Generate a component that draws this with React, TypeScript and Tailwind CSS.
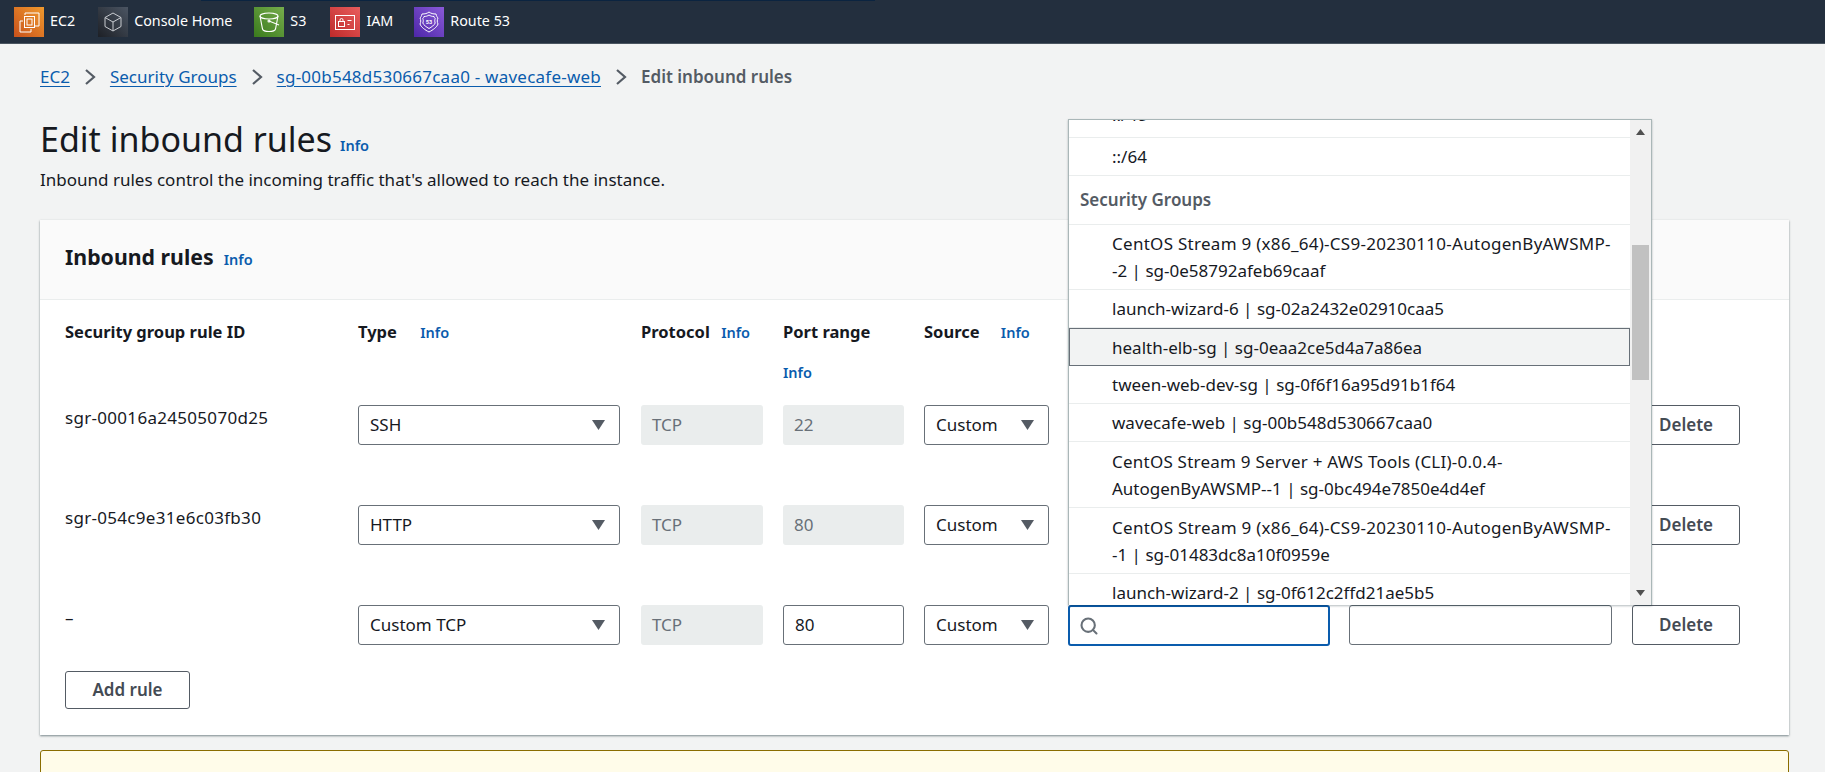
import React from "react";
import { Search } from "lucide-react";

function Caret({ className }: { className?: string }) {
  return (
    <svg width="13" height="10" viewBox="0 0 13 10" className={className}>
      <polygon points="0,0 13,0 6.5,10" fill="#545b64" />
    </svg>
  );
}

function Chevron() {
  return (
    <svg width="12" height="18" viewBox="0 0 12 18" className="mx-[14px] shrink-0">
      <path d="M2 2l8 7-8 7" fill="none" stroke="#545b64" strokeWidth="2.2" />
    </svg>
  );
}

function Info({ className }: { className?: string }) {
  return <span className={"text-[14.5px] font-semibold text-[#0a5cad] " + (className ?? "")}>Info</span>;
}

function Ec2Icon() {
  return (
    <svg width="30" height="30" viewBox="0 0 30 30">
      <defs>
        <linearGradient id="ec2" x1="0" y1="1" x2="1" y2="0">
          <stop offset="0" stopColor="#c8511b" />
          <stop offset="1" stopColor="#f09a2e" />
        </linearGradient>
      </defs>
      <rect width="30" height="30" fill="url(#ec2)" />
      <g fill="none" stroke="#fff" strokeWidth="1">
        <path d="M11 8V6h14v13h-4" />
        <path d="M9 14H6v11h11v-3" />
        <rect x="10.5" y="9.5" width="10" height="11" />
        <rect x="13" y="12" width="5" height="6" />
      </g>
    </svg>
  );
}

function HomeIcon() {
  return (
    <svg width="30" height="30" viewBox="0 0 30 30">
      <defs>
        <linearGradient id="home" x1="0" y1="1" x2="1" y2="0">
          <stop offset="0" stopColor="#1d2026" />
          <stop offset="1" stopColor="#4b5563" />
        </linearGradient>
      </defs>
      <rect width="30" height="30" fill="url(#home)" />
      <g fill="none" stroke="#c9ccd1" strokeWidth="1">
        <path d="M15 6l8 4.500v9L15 24l-8-4.500v-9z" />
        <path d="M7 10.500l8 4.500 8-4.500M15 15v9" />
      </g>
    </svg>
  );
}

function S3Icon() {
  return (
    <svg width="30" height="30" viewBox="0 0 30 30">
      <defs>
        <linearGradient id="s3" x1="0" y1="1" x2="1" y2="0">
          <stop offset="0" stopColor="#3a7a1d" />
          <stop offset="1" stopColor="#76ad4c" />
        </linearGradient>
      </defs>
      <rect width="30" height="30" fill="url(#s3)" />
      <g fill="none" stroke="#fff" strokeWidth="1.1">
        <ellipse cx="15" cy="9" rx="9" ry="3" />
        <path d="M6 9l2.500 13c.5 1.800 3.500 2.500 6.500 2.500s6-.7 6.500-2.500L24 9" />
        <path d="M15 14l10 4" />
        <circle cx="15" cy="14" r="1" />
      </g>
    </svg>
  );
}

function IamIcon() {
  return (
    <svg width="30" height="30" viewBox="0 0 30 30">
      <defs>
        <linearGradient id="iam" x1="0" y1="1" x2="1" y2="0">
          <stop offset="0" stopColor="#bd2a2a" />
          <stop offset="1" stopColor="#e95d5d" />
        </linearGradient>
      </defs>
      <rect width="30" height="30" fill="url(#iam)" />
      <g fill="none" stroke="#fff" strokeWidth="1">
        <rect x="5.500" y="8.500" width="19" height="14" />
        <rect x="8.500" y="14.500" width="6" height="5" />
        <path d="M10 14.500v-1.500a1.500 1.500 0 013 0v1.500" />
        <path d="M17.500 13.500h4M17.500 17.500h2" />
      </g>
    </svg>
  );
}

function RouteIcon() {
  return (
    <svg width="30" height="30" viewBox="0 0 30 30">
      <defs>
        <linearGradient id="r53" x1="0" y1="1" x2="1" y2="0">
          <stop offset="0" stopColor="#4d27a8" />
          <stop offset="1" stopColor="#8a5ad8" />
        </linearGradient>
      </defs>
      <rect width="30" height="30" fill="url(#r53)" />
      <g fill="none" stroke="#fff" strokeWidth="1">
        <path d="M15 5c2 1.500 4 2 7 2 .5 2 1 3 2 4-1 2-1 4 0 6-1 3-5 6-9 8-4-2-8-5-9-8 1-2 1-4 0-6 1-1 1.500-2 2-4 3 0 5-.5 7-2z" />
        <path d="M15 8c1.500 1 3 1.500 5 1.500.3 1 .6 1.500 1.200 2-.6 1.500-.6 3 0 4.500-.8 2-3.500 4-6.200 5.500-2.700-1.500-5.400-3.500-6.200-5.500.6-1.500.6-3 0-4.500.6-.5.9-1 1.200-2 2 0 3.500-.5 5-1.500z" />
      </g>
      <text x="15" y="17" textAnchor="middle" fontSize="5.500" fontWeight="700" fill="#fff" fontFamily="Roboto, sans-serif">53</text>
    </svg>
  );
}

function NavItem({ icon, label, className }: { icon: React.ReactNode; label: string; className: string }) {
  return (
    <div className={"flex items-center gap-[6px] " + className}>
      {icon}
      <span className="text-[14.3px] leading-none text-white">{label}</span>
    </div>
  );
}

function Select({ value }: { value: string }) {
  return (
    <div className="flex h-10 items-center justify-between rounded-[3px] border border-[#687078] bg-white pl-[11px] pr-[14px] text-[#16191f]">
      <span>{value}</span>
      <Caret />
    </div>
  );
}

function Disabled({ value }: { value: string }) {
  return (
    <div className="flex h-10 items-center rounded-[3px] bg-[#eaeded] pl-[11px] text-[#687078]">{value}</div>
  );
}

function TextBox({ value }: { value?: string }) {
  return (
    <div className="flex h-10 items-center rounded-[3px] border border-[#687078] bg-white pl-[11px] text-[#16191f]">{value}</div>
  );
}

function DeleteButton() {
  return (
    <div className="flex h-10 items-center justify-center rounded-[3px] border border-[#545b64] bg-white font-semibold text-[#444b54]">
      Delete
    </div>
  );
}

const rows = [
  { id: "sgr-00016a24505070d25", type: "SSH", port: "22", last: false },
  { id: "sgr-054c9e31e6c03fb30", type: "HTTP", port: "80", last: false },
  { id: "–", type: "Custom TCP", port: "80", last: true },
];

function Option({ children, tall }: { children: React.ReactNode; tall?: boolean }) {
  return (
    <div className={"border-b border-[#eaeded] pl-[43px] pr-[10px] leading-[27px] text-[#16191f] " + (tall ? "py-[5.5px]" : "py-[5px]")}>
      {children}
    </div>
  );
}

export default function App() {
  return (
    <div className="h-[772px] overflow-hidden bg-[#f2f3f3] font-['Noto_Sans',sans-serif] text-[17px] text-[#16191f]">
      <div className="relative flex h-[44px] items-center border-b border-[#4a5560] bg-[#232f3e]">
        <div className="absolute left-[201px] top-0 h-[1px] w-[674px] bg-[#0b2440]" />
        <NavItem icon={<Ec2Icon />} label="EC2" className="ml-[14px]" />
        <NavItem icon={<HomeIcon />} label="Console Home" className="ml-[23px]" />
        <NavItem icon={<S3Icon />} label="S3" className="ml-[22px]" />
        <NavItem icon={<IamIcon />} label="IAM" className="ml-[24px]" />
        <NavItem icon={<RouteIcon />} label="Route 53" className="ml-[21px]" />
      </div>

      <div className="pl-10 pr-9">
        <div className="mt-[21px] flex h-[24px] items-center">
          <span className="text-[#0a5cad] underline underline-offset-[3px]">EC2</span>
          <Chevron />
          <span className="text-[#0a5cad] underline underline-offset-[3px]">Security Groups</span>
          <Chevron />
          <span className="tracking-[0.23px] text-[#0a5cad] underline underline-offset-[3px]">sg-00b548d530667caa0 - wavecafe-web</span>
          <Chevron />
          <span className="font-semibold text-[#545b64]">Edit inbound rules</span>
        </div>

        <div className="mt-[30px] flex items-end">
          <h1 className="text-[34px] leading-[40px] font-normal">Edit inbound rules</h1>
          <Info className="mb-[2px] ml-[8px]" />
        </div>
        <p className="mt-[9px] leading-[24px] text-[#16191f]">
          Inbound rules control the incoming traffic that's allowed to reach the instance.
        </p>

        <div className="relative mt-[28px] h-[515px] bg-white shadow-[0_1px_2px_rgba(0,28,36,0.5)]">
          <div className="flex h-[80px] items-center border-b border-[#eaeded] bg-[#fafafa] pb-[6px] pl-[25px]">
            <h2 className="text-[21.3px] font-bold">Inbound rules</h2>
            <Info className="ml-[10px] mt-[6px]" />
          </div>

          <div className="grid grid-cols-[273px_263px_122px_121px_124px_261px_263px_108px] gap-x-5 pl-[25px] pt-[20px] text-[16.5px]">
            <div className="h-[65px] font-bold leading-[24px]">Security group rule ID</div>
            <div className="font-bold leading-[24px]">
              Type <Info className="ml-[19px]" />
            </div>
            <div className="font-bold leading-[24px]">
              Protocol <Info className="ml-[7px]" />
            </div>
            <div className="font-bold leading-[24px]">
              Port range
              <div className="mt-[16px]">
                <Info />
              </div>
            </div>
            <div className="font-bold leading-[24px]">
              Source <Info className="ml-[17px]" />
            </div>
          </div>

          <div className="grid grid-cols-[273px_263px_122px_121px_124px_261px_263px_108px] gap-x-5 gap-y-[60px] pl-[25px] pt-[20px]">
            {rows.map((r) => (
              <React.Fragment key={r.id}>
                <div className="pt-[1px] leading-[24px] tracking-[0.3px]">{r.id}</div>
                <div className="w-[262px]">
                  <Select value={r.type} />
                </div>
                <Disabled value="TCP" />
                {r.last ? <TextBox value={r.port} /> : <Disabled value={r.port} />}
                <div className="w-[125px]">
                  <Select value="Custom" />
                </div>
                {r.last ? (
                  <div className="flex h-[41px] w-[262px] items-center rounded-[3px] border-2 border-[#0a5cad] bg-white pl-[9px]">
                    <Search size={20} strokeWidth={2.5} className="text-[#687078]" />
                  </div>
                ) : (
                  <div />
                )}
                {r.last ? <TextBox /> : <div />}
                <DeleteButton />
              </React.Fragment>
            ))}
          </div>

          <div className="ml-[25px] mt-[25px] flex h-[38px] w-[125px] items-center justify-center rounded-[3px] border border-[#545b64] bg-white font-semibold text-[#444b54]">
            Add rule
          </div>

          {/* dropdown that hangs above the search box */}
          <div className="absolute left-[1028px] top-[-101px] flex h-[486px] w-[584px] overflow-hidden border-x border-t border-[#aab7b8] bg-white shadow-[0_1px_2px_rgba(0,28,36,0.3)]">
            <div className="h-full w-[561px] overflow-hidden">
              <div className="mt-[-21px] border-b border-[#eaeded] pb-[6px] pl-[43px] leading-[32px]">::/48</div>
              <div className="flex h-[38px] items-center border-b border-[#eaeded] pl-[43px]">::/64</div>
              <div className="flex h-[49px] items-center border-b border-[#eaeded] pl-[11px] font-semibold text-[#545b64]">Security Groups</div>
              <Option>
                <span className="tracking-[0.28px]">CentOS Stream 9 (x86_64)-CS9-20230110-AutogenByAWSMP-</span>
                <br />
                -2 | sg-0e58792afeb69caaf
              </Option>
              <Option>launch-wizard-6 | sg-02a2432e02910caa5</Option>
              <div className="border border-[#687078] bg-[#f2f3f3] py-[4.5px] pl-[42px] leading-[27px]">health-elb-sg | sg-0eaa2ce5d4a7a86ea</div>
              <Option>tween-web-dev-sg | sg-0f6f16a95d91b1f64</Option>
              <Option>wavecafe-web | sg-00b548d530667caa0</Option>
              <Option tall>
                <span className="tracking-[0.23px]">CentOS Stream 9 Server + AWS Tools (CLI)-0.0.4-</span>
                <br />
                AutogenByAWSMP--1 | sg-0bc494e7850e4d4ef
              </Option>
              <Option tall>
                <span className="tracking-[0.28px]">CentOS Stream 9 (x86_64)-CS9-20230110-AutogenByAWSMP-</span>
                <br />
                -1 | sg-01483dc8a10f0959e
              </Option>
              <Option>launch-wizard-2 | sg-0f612c2ffd21ae5b5</Option>
            </div>
            <div className="flex h-full w-[21px] flex-col items-center bg-[#f1f1f1]">
              <svg width="9" height="6" viewBox="0 0 9 6" className="mt-[9px]">
                <polygon points="0,6 9,6 4.500,0" fill="#505050" />
              </svg>
              <div className="mt-[110px] h-[135px] w-[17px] bg-[#c1c1c1]" />
              <svg width="9" height="6" viewBox="0 0 9 6" className="mt-auto mb-[9px]">
                <polygon points="0,0 9,0 4.500,6" fill="#505050" />
              </svg>
            </div>
          </div>
        </div>

        <div className="mt-[15px] h-[40px] rounded-t-[3px] border border-[#8a6d00] bg-[#fffce9]" />
      </div>
    </div>
  );
}
